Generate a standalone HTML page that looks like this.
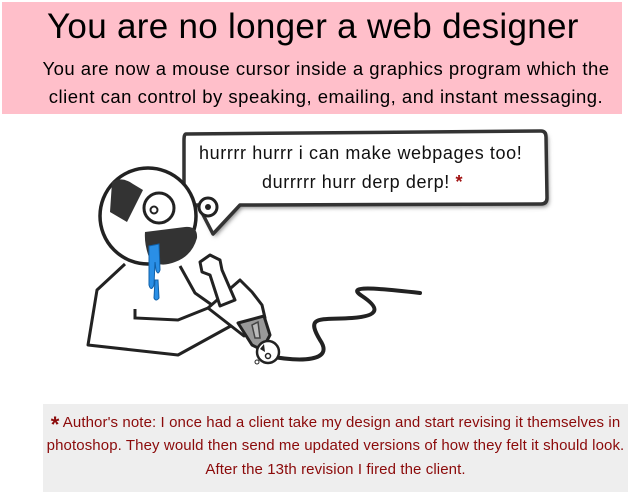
<!DOCTYPE html>
<html><head><meta charset="utf-8"><style>
html,body{margin:0;padding:0;background:#fff;width:628px;height:492px;overflow:hidden;position:relative;font-family:"Liberation Sans",sans-serif}
.top{position:absolute;left:2px;top:2px;width:620px;height:112px;background:#ffbfca}
.t1{position:absolute;left:47px;top:7px;font-size:35px;color:#000;white-space:nowrap;letter-spacing:0.3px}
.t2{position:absolute;left:0;width:628px;text-align:center;font-size:18.5px;color:#000;white-space:nowrap;letter-spacing:0.5px}
.note{position:absolute;left:43px;top:404px;width:585px;height:88px;background:#eeeeee}
.n{position:absolute;left:43px;width:585px;text-align:center;font-size:15px;color:#8b0a0a;white-space:nowrap;letter-spacing:0.1px}
.b{position:absolute;white-space:nowrap;font-size:18px;color:#111;letter-spacing:0.6px}
</style></head><body>
<div class="top"></div>
<div class="t1">You are no longer a web designer</div>
<div class="t2" style="top:58px;left:12px">You are now a mouse cursor inside a graphics program which the</div>
<div class="t2" style="top:86px;left:12px">client can control by speaking, emailing, and instant messaging.</div>

<svg width="628" height="492" style="position:absolute;left:0;top:0">
<defs><filter id="s" x="-10%" y="-10%" width="130%" height="140%"><feGaussianBlur stdDeviation="2"/></filter></defs>
<path d="M186 134 L541 131 Q546 131 546 137 L547 198 Q547 204 541 204 L240 205 L213 234 L198 205 L190 205 Q184 205 184 199 L184 140 Q184 134 186 134Z" fill="#888" filter="url(#s)" transform="translate(2,3)"/>
<path d="M186 134 L541 131 Q546 131 546 137 L547 198 Q547 204 541 204 L240 205 L213 234 L198 205 L190 205 Q184 205 184 199 L184 140 Q184 134 186 134Z" fill="#fff" stroke="#333" stroke-width="3.5" stroke-linejoin="round"/>
<!-- cord -->
<path d="M268 356 C300 362 335 362 320 340 C305 315 320 320 352 318 C380 316 380 308 362 296 C345 285 375 288 420 293" fill="none" stroke="#222" stroke-width="4" stroke-linecap="round"/>
<!-- body -->
<path d="M125 264 L97 290 L88 345 L178 355 L238 322 L212 305 L195 293 L180 266" fill="#fff" stroke="#222" stroke-width="3" stroke-linejoin="round"/>
<path d="M135 309 L135 318 L178 320 L208 308" fill="none" stroke="#222" stroke-width="3"/>
<!-- mouse -->
<path d="M208 308 L240 280 L252 292 L262 305 L265 318 L244 336 Z" fill="#fff" stroke="#222" stroke-width="3" stroke-linejoin="round"/>
<path d="M238 323 L264 316 L270 335 L262 350 L252 345 Z" fill="#999" stroke="#222" stroke-width="3" stroke-linejoin="round"/>
<path d="M252 325 L258 322 L260 338 L255 338Z" fill="#bbb" stroke="#444" stroke-width="1.5"/>
<path d="M200 262 L210 255 L220 260 L222 270 L235 300 L220 306 L210 275 L202 272 Z" fill="#fff" stroke="#222" stroke-width="3" stroke-linejoin="round"/>
<circle cx="268" cy="352" r="11" fill="#fff" stroke="#222" stroke-width="2.5"/>
<path d="M260 349 L264 344 L265 352 Z" fill="#222"/>
<circle cx="268" cy="356" r="2.5" fill="none" stroke="#222" stroke-width="1.5"/>
<circle cx="257" cy="362" r="2" fill="#fff" stroke="#222" stroke-width="1"/>
<!-- head -->
<circle cx="208" cy="207" r="9" fill="#fff" stroke="#222" stroke-width="3"/>
<circle cx="208" cy="207" r="3" fill="#222"/>
<circle cx="148" cy="216" r="48" fill="#fff" stroke="#222" stroke-width="3.5"/>
<path d="M112 182 Q122 176 133 184 L143 190 L127 222 L110 212 Z" fill="#333"/>
<path d="M145 232 L185 227 Q198 226 197 238 Q192 256 175 262 Q160 268 150 260 Q144 245 145 232 Z" fill="#333"/>
<circle cx="159" cy="208" r="15" fill="#fff" stroke="#222" stroke-width="3"/>
<circle cx="154" cy="210" r="3.5" fill="none" stroke="#222" stroke-width="2"/>
<!-- drool -->
<path d="M149 246 L159 244 L160 270 Q158 276 156 270 L155 262 L154 285 Q151 292 149 285 Z" fill="#2a8fe6" stroke="#1060a8" stroke-width="1"/>
<path d="M155 280 L158 280 L159 298 Q156 302 154 298 Z" fill="#2a8fe6" stroke="#1060a8" stroke-width="1"/>
</svg>
<div class="b" style="left:199px;top:143px">hurrrr hurrr i can make webpages too!</div>
<div class="b" style="left:262px;top:172px">durrrrr hurr derp derp! <span style="color:#a01010;font-weight:bold">*</span></div>

<div class="note"></div>
<div class="n" style="top:412px"><span style="font-size:22px;font-weight:bold;vertical-align:-5px;color:#8b0a0a">*</span> Author's note: I once had a client take my design and start revising it themselves in</div>
<div class="n" style="top:437px">photoshop. They would then send me updated versions of how they felt it should look.</div>
<div class="n" style="top:461px">After the 13th revision I fired the client.</div>
</body></html>
